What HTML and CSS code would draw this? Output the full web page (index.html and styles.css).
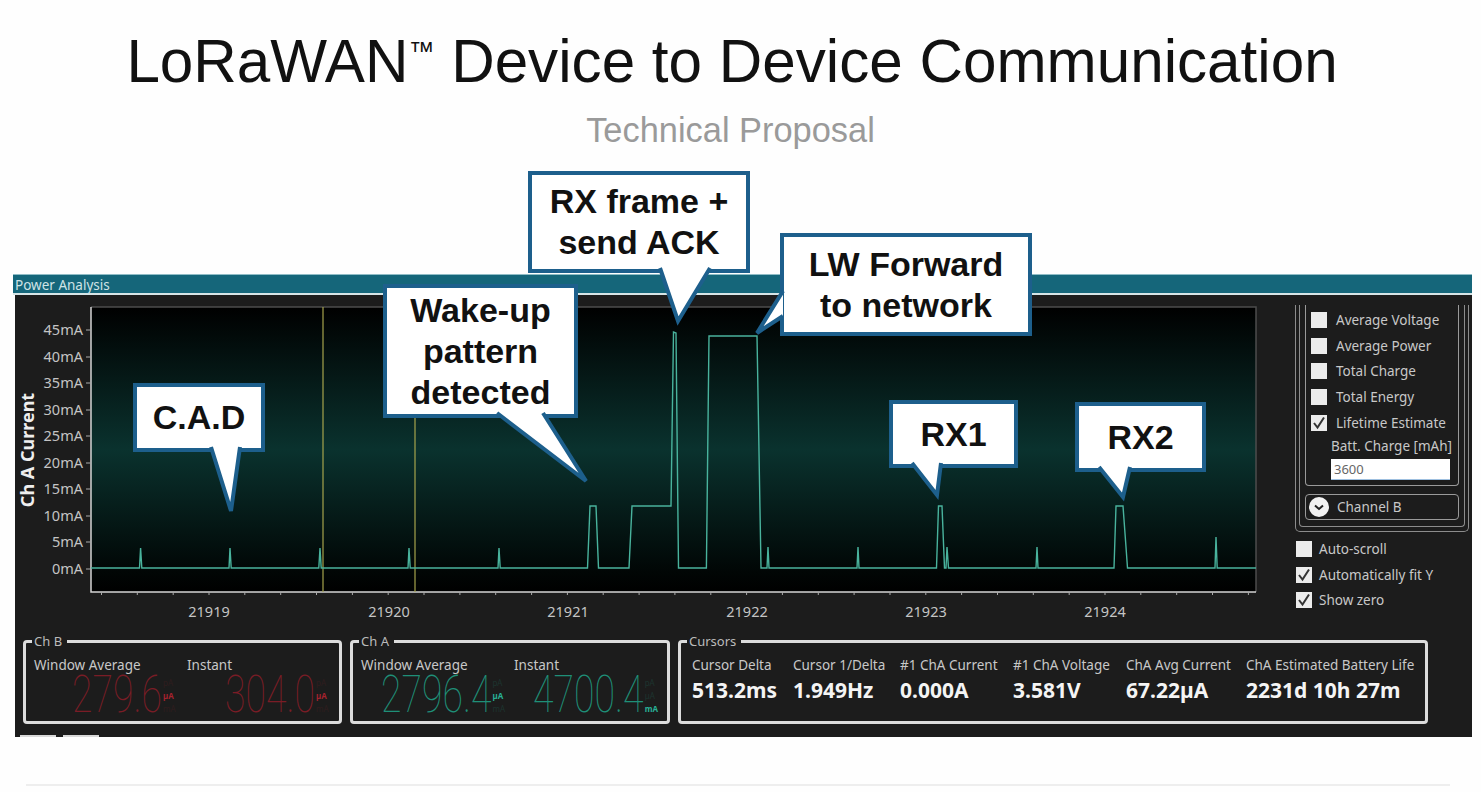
FILE: index.html
```html
<!DOCTYPE html>
<html lang="en">
<head>
	<meta charset="UTF-8">
	<title>LoRaWAN Device to Device Communication</title>
	<link rel="stylesheet" href="styles.css">
</head>
<body>
<div class="slide">
	<h1 class="title">LoRaWAN<sup class="tm">™</sup> Device to Device Communication</h1>
	<h2 class="subtitle">Technical Proposal</h2>

	<div class="window">
		<div class="titlebar">Power Analysis</div>
		<div class="win-body">
			<div class="upper">
				<svg class="chart" width="1268" height="336" viewBox="15 295 1268 336">
					<defs>
						<linearGradient id="plotbg" x1="0" y1="0" x2="0" y2="1">
							<stop offset="0" stop-color="#000"/>
							<stop offset="0.5" stop-color="#0a322e"/>
							<stop offset="0.93" stop-color="#010605"/>
							<stop offset="1" stop-color="#000"/>
						</linearGradient>
					</defs>
					<rect x="91" y="307" width="1165" height="285" fill="url(#plotbg)"/>
					<path class="frame" d="M91 307H1256V592"/>
					<path class="axis" d="M91 307V592H1256"/>
					<path class="tick" d="M86 330h5M86 357h5M86 383h5M86 410h5M86 436h5M86 463h5M86 489h5M86 516h5M86 542h5M86 569h5"/>
					<path class="tick" d="M101.5 592v3M137.3 592v3M173.2 592v3M209 592v3M244.8 592v3M280.7 592v3M316.5 592v3M352.4 592v3M388.2 592v3M424 592v3M459.9 592v3M495.7 592v3M531.6 592v3M567.4 592v3M603.2 592v3M639.1 592v3M674.9 592v3M710.8 592v3M746.6 592v3M782.4 592v3M818.3 592v3M854.1 592v3M890 592v3M925.8 592v3M961.6 592v3M997.5 592v3M1033.3 592v3M1069.2 592v3M1105 592v3M1140.8 592v3M1176.7 592v3M1212.5 592v3M1248.4 592v3"/>
					<path class="cursor" d="M323 307V592M415 307V592"/>
					<path class="trace" d="M91 568H139.5L140.6 548L141.8 568H229L230 548L231.2 568H318.8L320 548L321.2 568H408L409 548L410.2 568H498L499 548L500.2 568H587.5L590 506H596L598.5 568H629L632 506H671L673.5 332L676 333L678.5 568H706.4L709 336H757L761 568H767L768 547L769 568H857L858 547L859 568H936.5L938.5 506H942L944.5 568H946L947 547L948.5 568H1036L1037 547L1038 568H1114L1116 506H1123L1126 547L1127.5 568H1215L1216 537L1217.2 568H1256"/>
					<g class="ylabels">
						<text x="83" y="335">45mA</text>
						<text x="83" y="362">40mA</text>
						<text x="83" y="388">35mA</text>
						<text x="83" y="415">30mA</text>
						<text x="83" y="441">25mA</text>
						<text x="83" y="468">20mA</text>
						<text x="83" y="494">15mA</text>
						<text x="83" y="521">10mA</text>
						<text x="83" y="547">5mA</text>
						<text x="83" y="574">0mA</text>
					</g>
					<g class="xlabels">
						<text x="209" y="617">21919</text>
						<text x="389" y="617">21920</text>
						<text x="568" y="617">21921</text>
						<text x="747" y="617">21922</text>
						<text x="926" y="617">21923</text>
						<text x="1105" y="617">21924</text>
					</g>
					<text class="ytitle" transform="translate(34 450) rotate(-90)">Ch A Current</text>
				</svg>

				<div class="side">
					<div class="group-outer">
						<div class="group-mid">
							<div class="group-inner">
								<div class="row"><span class="box"></span>Average Voltage</div>
								<div class="row"><span class="box"></span>Average Power</div>
								<div class="row"><span class="box"></span>Total Charge</div>
								<div class="row"><span class="box"></span>Total Energy</div>
								<div class="row"><span class="box"><svg width="16" height="16" viewBox="0 0 16 16"><path d="M3 8l3.5 4.5L13 2.5"/></svg></span>Lifetime Estimate</div>
								<div class="batt-label">Batt. Charge [mAh]</div>
								<div class="batt-input">3600</div>
							</div>
							<div class="chan-b">
								<svg width="20" height="20" viewBox="0 0 20 20"><circle cx="10" cy="10" r="10" fill="#f2f2f2"/><path d="M6 8.5l4 3.5 4-3.5" fill="none" stroke="#222" stroke-width="2"/></svg>
								Channel B
							</div>
						</div>
					</div>
					<div class="options">
						<div class="row"><span class="box"></span>Auto-scroll</div>
						<div class="row"><span class="box"><svg width="16" height="16" viewBox="0 0 16 16"><path d="M3 8l3.5 4.5L13 2.5"/></svg></span>Automatically fit Y</div>
						<div class="row"><span class="box"><svg width="16" height="16" viewBox="0 0 16 16"><path d="M3 8l3.5 4.5L13 2.5"/></svg></span>Show zero</div>
					</div>
				</div>
			</div>

			<div class="readouts">
				<fieldset class="panel panel-b">
					<legend>Ch B</legend>
					<div class="meter">
						<div class="meter-label">Window Average</div>
						<div class="lcd red"><span class="digits">279.6</span><span class="units"><i>pA</i><b>µA</b><i>mA</i></span></div>
					</div>
					<div class="meter">
						<div class="meter-label">Instant</div>
						<div class="lcd red"><span class="digits">304.0</span><span class="units"><i>pA</i><b>µA</b><i>mA</i></span></div>
					</div>
				</fieldset>
				<fieldset class="panel panel-a">
					<legend>Ch A</legend>
					<div class="meter">
						<div class="meter-label">Window Average</div>
						<div class="lcd green"><span class="digits">2796.4</span><span class="units"><i>pA</i><b>µA</b><i>mA</i></span></div>
					</div>
					<div class="meter">
						<div class="meter-label">Instant</div>
						<div class="lcd green"><span class="digits">4700.4</span><span class="units"><i>pA</i><i>µA</i><b>mA</b></span></div>
					</div>
				</fieldset>
				<fieldset class="panel panel-c">
					<legend>Cursors</legend>
					<div class="stat s1"><div class="stat-label">Cursor Delta</div><div class="stat-value">513.2ms</div></div>
					<div class="stat s2"><div class="stat-label">Cursor 1/Delta</div><div class="stat-value">1.949Hz</div></div>
					<div class="stat s3"><div class="stat-label">#1 ChA Current</div><div class="stat-value">0.000A</div></div>
					<div class="stat s3"><div class="stat-label">#1 ChA Voltage</div><div class="stat-value">3.581V</div></div>
					<div class="stat s4"><div class="stat-label">ChA Avg Current</div><div class="stat-value">67.22µA</div></div>
					<div class="stat"><div class="stat-label">ChA Estimated Battery Life</div><div class="stat-value">2231d 10h 27m</div></div>
				</fieldset>
			</div>
		</div>
		<div class="tabs"><span></span><span></span></div>
	</div>

	<div class="footer-line"></div>

	<!-- callouts sit on top of the window -->
	<div class="callout c-cad">C.A.D</div>
	<div class="callout c-wake">Wake-up<br>pattern<br>detected</div>
	<div class="callout c-rx">RX frame +<br>send ACK</div>
	<div class="callout c-lw">LW Forward<br>to network</div>
	<div class="callout c-rx1">RX1</div>
	<div class="callout c-rx2">RX2</div>
	<svg class="tails" width="1481" height="792" viewBox="0 0 1481 792">
		<polyline points="211,447 231,511 240,447"/>
		<polyline points="497,413 586,481 543,413"/>
		<polyline points="660,268 678,321 710,268"/>
		<polyline points="783,291 757,333 783,316"/>
		<polyline points="912,463 937,495 941,463"/>
		<polyline points="1099,467 1123,497 1130,467"/>
	</svg>
</div>
</body>
</html>
```

FILE: styles.css
```css
html, body {
	margin: 0;
	padding: 0;
	background: #fefefe;
}
.slide {
	position: relative;
	width: 1481px;
	height: 792px;
	overflow: hidden;
	font-family: "Liberation Sans", Arial, sans-serif;
}
.title {
	margin: 0;
	padding-top: 28px;
	padding-right: 17px;
	height: 68px;
	line-height: 68px;
	font-size: 60.2px;
	font-weight: normal;
	text-align: center;
	color: #111;
}
.tm {
	font-size: 26px;
	line-height: 0;
	vertical-align: 22px;
}
.subtitle {
	margin: 0;
	padding-top: 14px;
	padding-right: 20px;
	height: 40px;
	line-height: 40px;
	font-size: 34.4px;
	font-weight: normal;
	text-align: center;
	color: #9a9a9a;
}

/* app window */
.window {
	position: relative;
	margin-top: 124px;
	margin-left: 13px;
	width: 1459px;
	font-family: "Noto Sans", "Open Sans", sans-serif;
}
.titlebar {
	height: 18px;
	line-height: 20px;
	padding-left: 2px;
	background: #15667a;
	border-top: 1px solid #8fbcc6;
	border-bottom: 2px solid #d6e4e6;
	font-size: 13.5px;
	color: #cfe3e6;
}
.win-body {
	margin-left: 2px;
	height: 442px;
	background: #1c1c1c;
}
.upper {
	display: flex;
	height: 337px;
}
.chart {
	display: block;
	flex: none;
}
.frame {
	fill: none;
	stroke: #4c4c4c;
	stroke-width: 1.5;
}
.axis {
	fill: none;
	stroke: #d4d4d4;
	stroke-width: 1.5;
}
.tick {
	fill: none;
	stroke: #aaa;
	stroke-width: 1;
}
.cursor {
	fill: none;
	stroke: #a5a34c;
	stroke-width: 1.2;
}
.trace {
	fill: none;
	stroke: #49b39d;
	stroke-width: 1.4;
}
.ylabels text {
	font-size: 14.5px;
	fill: #c4c4c4;
	text-anchor: end;
}
.xlabels text {
	font-size: 14.5px;
	fill: #c4c4c4;
	text-anchor: middle;
}
.ytitle {
	font-size: 18px;
	font-weight: bold;
	fill: #eee;
	text-anchor: middle;
}

/* right hand options */
.side {
	margin-left: 12px;
	padding-top: 10px;
	width: 174px;
	font-size: 13.5px;
	color: #c8c8c8;
}
.group-outer {
	box-sizing: border-box;
	height: 227px;
	padding: 0 3px 3px;
	border: 1.5px solid #8c8c8c;
	border-top: none;
	border-radius: 0 0 5px 5px;
}
.group-mid {
	box-sizing: border-box;
	height: 222px;
	padding: 0 5px;
	border: 1.5px solid #8c8c8c;
	border-top: none;
	border-radius: 0 0 4px 4px;
}
.group-inner {
	box-sizing: border-box;
	height: 181px;
	padding-top: 2px;
	padding-left: 5px;
	border: 1.5px solid #9a9a9a;
	border-top: none;
	border-radius: 0 0 4px 4px;
}
.row {
	display: flex;
	align-items: center;
	gap: 7px;
	height: 25.7px;
	white-space: nowrap;
}
.group-inner .row {
	gap: 9px;
}
.box {
	display: block;
	flex: none;
	width: 16px;
	height: 16px;
	background: #ececec;
}
.box svg {
	display: block;
}
.box path {
	fill: none;
	stroke: #333;
	stroke-width: 2;
}
.batt-label {
	margin-left: 20px;
	height: 22px;
	line-height: 22px;
	white-space: nowrap;
}
.batt-input {
	box-sizing: border-box;
	margin-top: 2px;
	margin-left: 20px;
	width: 119px;
	height: 21px;
	line-height: 21px;
	padding-left: 3px;
	background: #fff;
	border-bottom: 1px solid #9fc0e0;
	font-size: 13px;
	color: #666;
}
.chan-b {
	display: flex;
	align-items: center;
	gap: 8px;
	box-sizing: border-box;
	margin-top: 8px;
	height: 26px;
	padding-left: 3px;
	border: 1.5px solid #9a9a9a;
	border-radius: 4px;
}
.options {
	margin-top: 4px;
	margin-left: 1px;
}

/* bottom readouts */
.readouts {
	display: flex;
	gap: 8px;
	padding-left: 8px;
}
.panel {
	box-sizing: border-box;
	display: flex;
	margin: 0;
	padding: 0;
	height: 92px;
	border: 3px solid #dcdcdc;
	border-radius: 4px;
	min-inline-size: 0;
	color: #c8c8c8;
	font-size: 13.5px;
}
.panel legend {
	margin-left: -2px;
	padding: 0 5px 0 2px;
	font-size: 13px;
	line-height: 18px;
	color: #bbb;
}
.panel-b {
	width: 319px;
	padding-left: 8px;
}
.panel-a {
	width: 320px;
	padding-left: 8px;
}
.panel-c {
	width: 750px;
	margin-left: 0;
	padding-left: 11px;
}
.panel-c legend {
	margin-left: -5px;
}
.meter {
	width: 153px;
	padding-top: 6px;
	flex: none;
}
.meter-label {
	height: 18px;
	line-height: 18px;
	white-space: nowrap;
}
.lcd {
	display: flex;
	justify-content: flex-end;
	align-items: center;
	height: 40px;
	padding-top: 1px;
	padding-right: 9px;
}
.digits {
	display: block;
	font-family: Roboto, sans-serif;
	font-weight: 100;
	font-size: 52px;
	line-height: 40px;
	transform: scaleX(0.72);
	transform-origin: right center;
	white-space: nowrap;
}
.units {
	display: flex;
	flex-direction: column;
	width: 15px;
	margin-left: 1px;
	font-size: 8px;
	line-height: 13px;
}
.units i {
	font-style: normal;
	opacity: 0.2;
}
.red {
	color: #7a1c26;
}
.red .units b {
	color: #a5222e;
}
.green {
	color: #1f8f78;
}
.green .units b {
	color: #28b096;
}
.stat {
	padding-top: 6px;
	flex: none;
}
.s1 { width: 101px; }
.s2 { width: 107px; }
.s3 { width: 113px; }
.s4 { width: 120px; }
.stat-label {
	height: 18px;
	line-height: 18px;
	white-space: nowrap;
}
.stat-value {
	margin-top: 3px;
	line-height: 26px;
	font-size: 21px;
	font-weight: bold;
	color: #f4f4f4;
	white-space: nowrap;
}
.tabs {
	display: flex;
	gap: 7px;
	margin-top: -2px;
	margin-left: 7px;
	height: 2px;
}
.tabs span {
	width: 36px;
	background: #d8d8d8;
}
.footer-line {
	margin: 47px 31px 0 26px;
	height: 2px;
	background: #eeeeee;
}

/* callouts */
.callout {
	position: absolute;
	display: flex;
	align-items: center;
	justify-content: center;
	box-sizing: border-box;
	border: 4px solid #1d5f8c;
	background: #fff;
	font-size: 34px;
	font-weight: bold;
	line-height: 41px;
	text-align: center;
	color: #111;
}
.c-cad { left: 133px; top: 383px; width: 132px; height: 69px; }
.c-wake { left: 383px; top: 284px; width: 195px; height: 134px; }
.c-rx { left: 528px; top: 171px; width: 222px; height: 102px; }
.c-lw { left: 780px; top: 233px; width: 252px; height: 103px; }
.c-rx1 { left: 889px; top: 400px; width: 129px; height: 68px; }
.c-rx2 { left: 1075px; top: 402px; width: 131px; height: 70px; }
.tails {
	position: absolute;
	left: 0;
	top: 0;
}
.tails polyline {
	fill: #fff;
	stroke: #1d5f8c;
	stroke-width: 4;
}
```
